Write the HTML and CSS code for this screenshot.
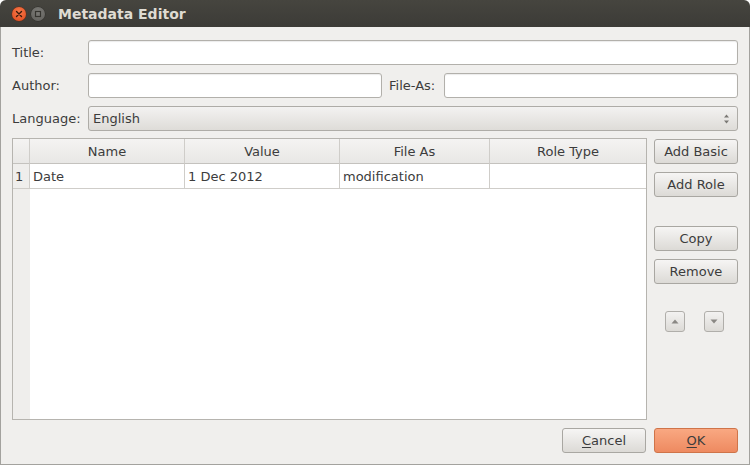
FILE: index.html
```html
<!DOCTYPE html>
<html>
<head>
<meta charset="utf-8">
<link rel="stylesheet" href="styles.css">
</head>
<body>
<div class="window">
  <div class="titlebar">
    <span class="wbtn close">
      <svg width="14" height="14" viewBox="0 0 14 14"><path d="M4.5 4.5 L9.5 9.5 M9.5 4.5 L4.5 9.5" stroke="#3a1a0c" stroke-width="1.4" stroke-linecap="round"/></svg>
    </span>
    <span class="wbtn mini">
      <svg width="14" height="14" viewBox="0 0 14 14"><rect x="4.5" y="4.5" width="5" height="5" fill="none" stroke="#35342f" stroke-width="1.2"/></svg>
    </span>
    <span class="wtitle">Metadata Editor</span>
  </div>
  <div class="content">
    <div class="row">
      <label class="lbl">Title:</label>
      <div class="input grow"></div>
    </div>
    <div class="row">
      <label class="lbl">Author:</label>
      <div class="input author"></div>
      <label class="lbl2">File-As:</label>
      <div class="input grow"></div>
    </div>
    <div class="row last">
      <label class="lbl">Language:</label>
      <div class="combo grow">
        <span>English</span>
        <svg class="spin" width="7" height="12" viewBox="0 0 7 12"><path d="M3.5 1.5 L6 4.5 L1 4.5 Z M3.5 10.5 L6 7.5 L1 7.5 Z" fill="#7a7874"/></svg>
      </div>
    </div>
    <div class="main">
      <div class="table">
        <div class="trow head">
          <div class="cell num"></div>
          <div class="cell">Name</div>
          <div class="cell">Value</div>
          <div class="cell">File As</div>
          <div class="cell lastc">Role Type</div>
        </div>
        <div class="trow data">
          <div class="cell num">1</div>
          <div class="cell">Date</div>
          <div class="cell">1 Dec 2012</div>
          <div class="cell">modification</div>
          <div class="cell lastc"></div>
        </div>
        <div class="filler"></div>
      </div>
      <div class="side">
        <div class="btn">Add Basic</div>
        <div class="btn">Add Role</div>
        <div class="btn copy">Copy</div>
        <div class="btn">Remove</div>
        <div class="arrows">
          <div class="abtn"><svg width="8" height="5" viewBox="0 0 8 5"><path d="M4 0.5 L7.5 4.5 L0.5 4.5 Z" fill="#8a8884"/></svg></div>
          <div class="abtn"><svg width="8" height="5" viewBox="0 0 8 5"><path d="M4 4.5 L7.5 0.5 L0.5 0.5 Z" fill="#8a8884"/></svg></div>
        </div>
      </div>
    </div>
    <div class="footer">
      <div class="btn"><u>C</u>ancel</div>
      <div class="btn ok"><u>O</u>K</div>
    </div>
  </div>
</div>
</body>
</html>
```
FILE: styles.css
```css
* { box-sizing: border-box; }
html, body { margin: 0; padding: 0; background: #ffffff; }
body {
  font-family: "DejaVu Sans", sans-serif;
  font-size: 13px;
  color: #3c3c3c;
}
.window {
  width: 750px;
  height: 465px;
  display: flex;
  flex-direction: column;
}
.titlebar {
  height: 27px;
  flex: none;
  background: linear-gradient(#46453f, #3c3b37);
  border-radius: 6px 6px 0 0;
  display: flex;
  align-items: center;
  padding-left: 12px;
}
.wbtn {
  width: 14px;
  height: 14px;
  border-radius: 50%;
  display: flex;
}
.close {
  background: radial-gradient(circle at 50% 35%, #f77a4b, #e2471a);
  box-shadow: 0 0 0 0.5px #6b2a12;
}
.mini {
  margin-left: 5px;
  background: radial-gradient(circle at 50% 35%, #7d7c78, #5e5d59);
  box-shadow: 0 0 0 0.5px #2e2d2a;
}
.wtitle {
  margin-left: 13px;
  color: #dfdbd2;
  font-weight: bold;
  font-size: 14px;
}
.content {
  flex: 1;
  display: flex;
  flex-direction: column;
  background: #f0efed;
  border: 1px solid #a3a29e;
  border-top: none;
  padding: 13px 11px 11px;
}
.row {
  display: flex;
  align-items: center;
  height: 25px;
  margin-bottom: 8px;
}
.row.last { margin-bottom: 7px; }
.lbl { width: 76px; flex: none; }
.lbl2 { margin: 0 9px 0 7px; flex: none; }
.grow { flex: 1; }
.input {
  height: 25px;
  background: #ffffff;
  border: 1px solid #b2b0ab;
  border-radius: 3px;
  box-shadow: inset 0 1px 1px rgba(0,0,0,0.08);
}
.author { width: 294px; flex: none; }
.combo {
  height: 25px;
  border: 1px solid #aeaca7;
  border-radius: 3px;
  background: linear-gradient(#f3f2f1, #dedcd8);
  display: flex;
  align-items: center;
  justify-content: space-between;
  padding: 0 7px 0 4px;
}
.main {
  flex: 1;
  display: flex;
  gap: 7px;
  min-height: 0;
}
.table {
  flex: 1;
  border: 1px solid #b6b4af;
  background: #ffffff;
  display: flex;
  flex-direction: column;
}
.trow {
  display: grid;
  grid-template-columns: 17px 155px 155px 150px 1fr;
  height: 25px;
  flex: none;
}
.cell {
  border-right: 1px solid #cfcdc9;
  border-bottom: 1px solid #cfcdc9;
  display: flex;
  align-items: center;
  padding-left: 3px;
  white-space: nowrap;
}
.cell.lastc { border-right: none; }
.head .cell {
  background: linear-gradient(#f4f3f2, #e8e7e5);
  justify-content: center;
  padding-left: 0;
  border-bottom-color: #c4c2be;
}
.cell.num {
  background: #efeeec;
  padding-left: 2px;
}
.head .cell.num { background: linear-gradient(#f4f3f2, #e8e7e5); }
.filler {
  flex: 1;
  background: linear-gradient(to right, #efeeec 17px, #ffffff 17px);
}
.side {
  width: 84px;
  flex: none;
  display: flex;
  flex-direction: column;
  padding-top: 1px;
}
.btn {
  height: 25px;
  width: 84px;
  border: 1px solid #a9a7a2;
  border-radius: 3px;
  background: linear-gradient(#f6f5f4, #dcdad6);
  display: flex;
  align-items: center;
  justify-content: center;
  margin-bottom: 8px;
  white-space: nowrap;
}
.btn u { text-decoration-thickness: 1px; text-underline-offset: 2px; }
.side .btn.copy { margin-top: 21px; }
.arrows {
  display: flex;
  justify-content: space-between;
  padding: 19px 14px 0 11px;
}
.abtn {
  width: 20px;
  height: 21px;
  border: 1px solid #b0aeaa;
  border-radius: 3px;
  background: linear-gradient(#f3f2f1, #dcdad6);
  display: flex;
  align-items: center;
  justify-content: center;
}
.footer {
  display: flex;
  justify-content: flex-end;
  gap: 8px;
  padding-top: 8px;
  flex: none;
}
.footer .btn { margin-bottom: 0; }
.btn.ok {
  background: linear-gradient(#f9a882, #ee8a60);
  border-color: #cf7449;
}
```
